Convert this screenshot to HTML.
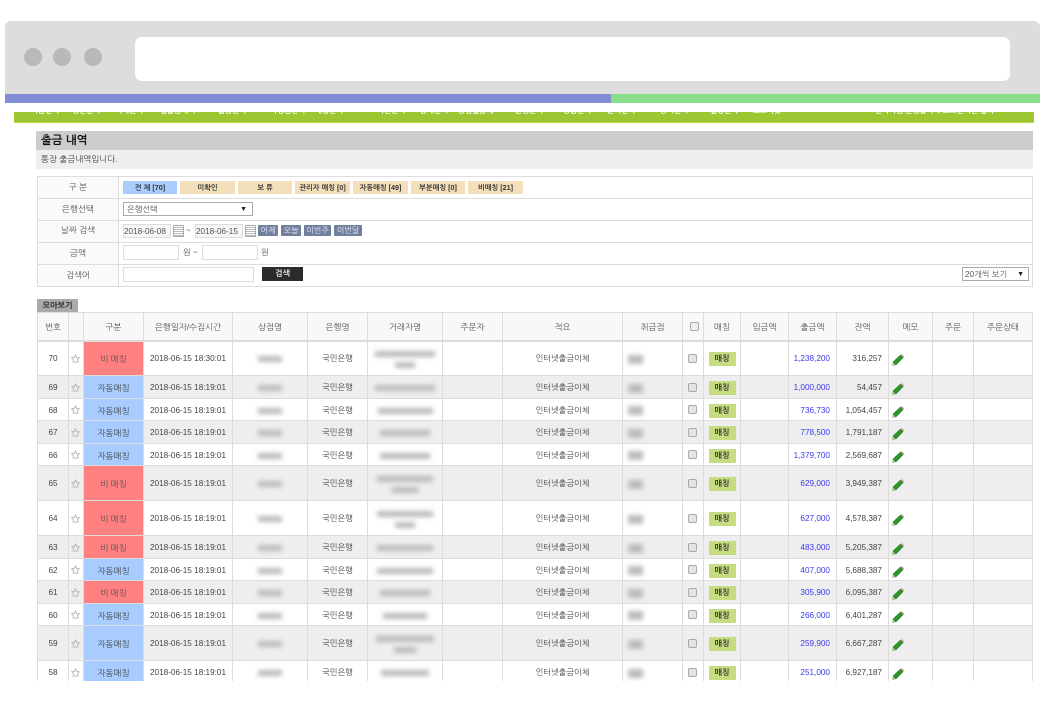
<!DOCTYPE html>
<html lang="ko"><head><meta charset="utf-8"><title>출금 내역</title>
<style>
*{box-sizing:border-box}
html,body{margin:0;padding:0;background:#fff}
body{width:1051px;height:705px;overflow:hidden;position:relative;font-family:"Liberation Sans","NanumGothic","Noto Sans CJK KR",sans-serif;font-size:8.2px;color:#444}
.a{position:absolute}
.nav span{position:absolute;top:-7px;color:#fff;font-size:7.5px;font-weight:bold;white-space:nowrap;line-height:11px}
.lbl{position:absolute;left:37px;width:82px;text-align:center;color:#555;font-size:8.5px;line-height:22px}
.chip{position:absolute;top:181px;height:13px;background:#f3dfba;color:#333;font-size:7.2px;line-height:13px;text-align:center;font-weight:bold;white-space:nowrap;overflow:hidden}
.inp{position:absolute;background:#fff;border:1px solid #ddd;font-size:8.2px;line-height:13px;color:#555;white-space:nowrap}
.btn{position:absolute;top:225px;height:11px;background:#7280a0;color:#e8e8f0;font-size:8px;line-height:11px;text-align:center;border-radius:1px}
.cal{position:absolute;top:225px;width:11px;height:12px;border:1px solid #aaa;border-radius:1px;background:repeating-linear-gradient(#fff 0 1px,#bbb 1px 2px)}
.wrap{position:absolute;left:37px;top:312px;width:996px;height:369px;overflow:hidden;filter:blur(.25px)}
table{border-collapse:collapse;table-layout:fixed;width:995px}
td,th{border:1px solid #dcdcdc;padding:2px 0 0;text-align:center;font-weight:normal;font-size:8.2px;color:#444;white-space:nowrap;overflow:hidden;line-height:10px}
th{background:#f8f8f8;font-size:8.5px;color:#555;border-bottom:2px solid #dcdcdc}
tr.g td{background:#eee}
td.r,tr.g td.r{background:#ff8080;color:#555;font-size:8.5px}
td.b,tr.g td.b{background:#a8ccff;color:#444;font-size:8.5px}
td.n{text-align:right;padding-right:6px}
td.u{text-align:right;padding-right:6px;color:#3a3aee}
.bl{display:block;margin:0 auto;background:#bbb;filter:blur(2.5px);height:6px}
.bk{display:block;margin-left:5px;width:15px;height:9px;background:#bbb;filter:blur(2.5px)}
.ck{display:block;width:9px;height:9px;margin:0 auto;border:1px solid #aaa;border-radius:2px;background:#e4e4e4;transform:translate(-1px,-1px)}
th .ck{transform:translate(1px,-1px);background:#eee}
.m{display:block;width:27px;height:14px;margin:0 auto;background:#c5dc80;color:#333;font-weight:bold;font-size:8px;line-height:14px;font-style:normal}
svg{display:block}
.s{margin-left:2px;transform:translateY(-1px)}
.p{margin-left:3px;transform:translateY(1px)}
</style></head><body>

<div class="a" style="left:5px;top:21px;width:1035px;height:73px;background:#ddd;border-radius:6px 6px 0 0"></div>
<div class="a" style="left:135px;top:37px;width:875px;height:44px;background:#fff;border-radius:7px"></div>
<div class="a" style="left:24px;top:48px;width:18px;height:18px;border-radius:50%;background:#b9b9b9"></div>
<div class="a" style="left:53px;top:48px;width:18px;height:18px;border-radius:50%;background:#b9b9b9"></div>
<div class="a" style="left:84px;top:48px;width:18px;height:18px;border-radius:50%;background:#b9b9b9"></div>
<div class="a" style="left:5px;top:94px;width:606px;height:9px;background:#828dd4"></div>
<div class="a" style="left:611px;top:94px;width:429px;height:9px;background:#8ae08a"></div>

<div class="a nav" style="left:14px;top:112px;width:1020px;height:11px;background:#9dc633;border-bottom:1px solid #b4d83c;overflow:hidden">
<span style="left:17px">자금관리</span><span style="left:58px">정산관리</span><span style="left:101px">거래관리</span><span style="left:146px">입출금내역</span><span style="left:204px">출금관리</span><span style="left:256px">가맹점관리</span><span style="left:301px">매칭관리</span><span style="left:363px">차단관리</span><span style="left:406px">통계관리</span><span style="left:444px">상점별통계</span><span style="left:501px">은행관리</span><span style="left:549px">상품관리</span><span style="left:593px">문의관리</span><span style="left:646px">공지관리</span><span style="left:696px">설정관리</span><span style="left:739px">로그아웃</span><span style="left:861px">관리자님 환영합니다 로그인시간 접속</span>
</div>

<div class="a" style="left:36px;top:131px;width:997px;height:19px;background:#cdcdcd;padding-left:5px;font-size:11.5px;font-weight:bold;line-height:21px;color:#111">출금 내역</div>
<div class="a" style="left:36px;top:150px;width:997px;height:19px;background:#efefef;padding-left:5px;font-size:8.5px;line-height:19px;color:#444">통장 출금내역입니다.</div>

<div class="a" style="left:37px;top:176px;width:996px;height:111px;border:1px solid #dcdcdc"></div>
<div class="a" style="left:38px;top:177px;width:81px;height:109px;background:#fafafa;border-right:1px solid #dcdcdc"></div>
<div class="a" style="left:37px;top:198px;width:996px;height:1px;background:#dcdcdc"></div>
<div class="a" style="left:37px;top:220px;width:996px;height:1px;background:#dcdcdc"></div>
<div class="a" style="left:37px;top:242px;width:996px;height:1px;background:#dcdcdc"></div>
<div class="a" style="left:37px;top:264px;width:996px;height:1px;background:#dcdcdc"></div>
<div class="lbl" style="top:176px">구 분</div>
<div class="lbl" style="top:198px">은행선택</div>
<div class="lbl" style="top:219px">날짜 검색</div>
<div class="lbl" style="top:242px">금액</div>
<div class="lbl" style="top:264px">검색어</div>

<div class="chip" style="left:123px;width:54px;background:#aaccff">전 체 [70]</div>
<div class="chip" style="left:180px;width:55px">미확인</div>
<div class="chip" style="left:238px;width:54px">보 류</div>
<div class="chip" style="left:295px;width:55px">관리자 매칭 [0]</div>
<div class="chip" style="left:353px;width:55px">자동매칭 [49]</div>
<div class="chip" style="left:411px;width:54px">부분매칭 [0]</div>
<div class="chip" style="left:468px;width:55px">비매칭 [21]</div>

<div class="inp" style="left:123px;top:202px;width:130px;height:14px;border-color:#aaa;padding-left:3px">은행선택<span style="position:absolute;right:5px;top:0;font-size:7px;color:#222">▼</span></div>
<div class="inp" style="left:123px;top:224px;width:48px;height:14px;background:#f6f6f6;padding-left:0">2018-06-08</div>
<div class="cal" style="left:173px"></div>
<div class="a" style="left:186px;top:225px;line-height:12px;color:#555">~</div>
<div class="inp" style="left:195px;top:224px;width:48px;height:14px;background:#f6f6f6;padding-left:0">2018-06-15</div>
<div class="cal" style="left:245px"></div>
<div class="btn" style="left:258px;width:20px">어제</div>
<div class="btn" style="left:281px;width:20px">오늘</div>
<div class="btn" style="left:304px;width:27px">이번주</div>
<div class="btn" style="left:334px;width:28px">이번달</div>

<div class="inp" style="left:123px;top:245px;width:56px;height:15px"></div>
<div class="a" style="left:183px;top:246px;line-height:13px;color:#555">원 ~</div>
<div class="inp" style="left:202px;top:245px;width:56px;height:15px"></div>
<div class="a" style="left:261px;top:246px;line-height:13px;color:#555">원</div>
<div class="inp" style="left:123px;top:267px;width:131px;height:15px"></div>
<div class="a" style="left:262px;top:267px;width:41px;height:14px;background:#2b2b2b;color:#eee;font-weight:bold;font-size:8px;line-height:14px;text-align:center">검색</div>
<div class="inp" style="left:962px;top:267px;width:67px;height:14px;border-color:#aaa;padding-left:2px">20개씩 보기<span style="position:absolute;right:4px;top:0;font-size:7px;color:#222">▼</span></div>

<div class="a" style="left:37px;top:299px;width:41px;height:13px;background:#aaa;color:#222;font-size:8px;font-weight:bold;line-height:13px;text-align:center">모아보기</div>

<svg width="0" height="0" style="position:absolute"><defs>
<symbol id="st" viewBox="0 0 10 10"><path d="M5 1 L6.3 3.8 L9.2 4.2 L7.2 6.2 L7.7 9 L2.3 9 L2.8 6.2 L.8 4.2 L3.7 3.8 Z" fill="none" stroke="#b5b5b5" stroke-width="1"/></symbol>
<symbol id="pn" viewBox="0 0 12 12"><path d="M.6 11.4 L1.4 7.6 L8.4 1 L11.2 3.6 L4.4 10.6 Z" fill="#2a962a" stroke="#1c661c" stroke-width=".5"/><path d="M8.4 1 L9.8 .2 L12 2.2 L11.2 3.6 Z" fill="#e08a8a"/><path d="M.6 11.4 L1.2 8.8 L3.2 10.8 Z" fill="#d9c49a"/></symbol>
</defs></svg>

<div class="wrap"><table>
<colgroup><col style="width:31px"><col style="width:15px"><col style="width:60px"><col style="width:89px"><col style="width:75px"><col style="width:60px"><col style="width:75px"><col style="width:60px"><col style="width:120px"><col style="width:60px"><col style="width:21px"><col style="width:37px"><col style="width:48px"><col style="width:48px"><col style="width:52px"><col style="width:44px"><col style="width:41px"><col style="width:59px"></colgroup>
<tr style="height:28px"><th>번호</th><th></th><th>구분</th><th>은행일자/수집시간</th><th>상점명</th><th>은행명</th><th>거래자명</th><th>주문자</th><th>적요</th><th>취급점</th><th><i class="ck"></i></th><th>매칭</th><th>입금액</th><th>출금액</th><th>잔액</th><th>메모</th><th>주문</th><th>주문상태</th></tr>
<tr style="height:35px"><td>70</td><td><svg class="s" width="9" height="9"><use href="#st"/></svg></td><td class="r">비 매칭</td><td>2018-06-15 18:30:01</td><td><i class="bl" style="width:24px"></i></td><td>국민은행</td><td><i class="bl" style="width:60px;margin-bottom:5px"></i><i class="bl" style="width:20px"></i></td><td></td><td>인터넷출금이체</td><td><i class="bk"></i></td><td><i class="ck"></i></td><td><i class="m">매칭</i></td><td></td><td class="u">1,238,200</td><td class="n">316,257</td><td><svg class="p" width="12" height="12"><use href="#pn"/></svg></td><td></td><td></td></tr>
<tr class="g" style="height:23px"><td>69</td><td><svg class="s" width="9" height="9"><use href="#st"/></svg></td><td class="b">자동매칭</td><td>2018-06-15 18:19:01</td><td><i class="bl" style="width:24px"></i></td><td>국민은행</td><td><i class="bl" style="width:60px"></i></td><td></td><td>인터넷출금이체</td><td><i class="bk"></i></td><td><i class="ck"></i></td><td><i class="m">매칭</i></td><td></td><td class="u">1,000,000</td><td class="n">54,457</td><td><svg class="p" width="12" height="12"><use href="#pn"/></svg></td><td></td><td></td></tr>
<tr style="height:22px"><td>68</td><td><svg class="s" width="9" height="9"><use href="#st"/></svg></td><td class="b">자동매칭</td><td>2018-06-15 18:19:01</td><td><i class="bl" style="width:24px"></i></td><td>국민은행</td><td><i class="bl" style="width:55px"></i></td><td></td><td>인터넷출금이체</td><td><i class="bk"></i></td><td><i class="ck"></i></td><td><i class="m">매칭</i></td><td></td><td class="u">736,730</td><td class="n">1,054,457</td><td><svg class="p" width="12" height="12"><use href="#pn"/></svg></td><td></td><td></td></tr>
<tr class="g" style="height:23px"><td>67</td><td><svg class="s" width="9" height="9"><use href="#st"/></svg></td><td class="b">자동매칭</td><td>2018-06-15 18:19:01</td><td><i class="bl" style="width:24px"></i></td><td>국민은행</td><td><i class="bl" style="width:50px"></i></td><td></td><td>인터넷출금이체</td><td><i class="bk"></i></td><td><i class="ck"></i></td><td><i class="m">매칭</i></td><td></td><td class="u">778,500</td><td class="n">1,791,187</td><td><svg class="p" width="12" height="12"><use href="#pn"/></svg></td><td></td><td></td></tr>
<tr style="height:22px"><td>66</td><td><svg class="s" width="9" height="9"><use href="#st"/></svg></td><td class="b">자동매칭</td><td>2018-06-15 18:19:01</td><td><i class="bl" style="width:24px"></i></td><td>국민은행</td><td><i class="bl" style="width:50px"></i></td><td></td><td>인터넷출금이체</td><td><i class="bk"></i></td><td><i class="ck"></i></td><td><i class="m">매칭</i></td><td></td><td class="u">1,379,700</td><td class="n">2,569,687</td><td><svg class="p" width="12" height="12"><use href="#pn"/></svg></td><td></td><td></td></tr>
<tr class="g" style="height:35px"><td>65</td><td><svg class="s" width="9" height="9"><use href="#st"/></svg></td><td class="r">비 매칭</td><td>2018-06-15 18:19:01</td><td><i class="bl" style="width:24px"></i></td><td>국민은행</td><td><i class="bl" style="width:56px;margin-bottom:5px"></i><i class="bl" style="width:26px"></i></td><td></td><td>인터넷출금이체</td><td><i class="bk"></i></td><td><i class="ck"></i></td><td><i class="m">매칭</i></td><td></td><td class="u">629,000</td><td class="n">3,949,387</td><td><svg class="p" width="12" height="12"><use href="#pn"/></svg></td><td></td><td></td></tr>
<tr style="height:35px"><td>64</td><td><svg class="s" width="9" height="9"><use href="#st"/></svg></td><td class="r">비 매칭</td><td>2018-06-15 18:19:01</td><td><i class="bl" style="width:24px"></i></td><td>국민은행</td><td><i class="bl" style="width:56px;margin-bottom:5px"></i><i class="bl" style="width:20px"></i></td><td></td><td>인터넷출금이체</td><td><i class="bk"></i></td><td><i class="ck"></i></td><td><i class="m">매칭</i></td><td></td><td class="u">627,000</td><td class="n">4,578,387</td><td><svg class="p" width="12" height="12"><use href="#pn"/></svg></td><td></td><td></td></tr>
<tr class="g" style="height:23px"><td>63</td><td><svg class="s" width="9" height="9"><use href="#st"/></svg></td><td class="r">비 매칭</td><td>2018-06-15 18:19:01</td><td><i class="bl" style="width:24px"></i></td><td>국민은행</td><td><i class="bl" style="width:56px"></i></td><td></td><td>인터넷출금이체</td><td><i class="bk"></i></td><td><i class="ck"></i></td><td><i class="m">매칭</i></td><td></td><td class="u">483,000</td><td class="n">5,205,387</td><td><svg class="p" width="12" height="12"><use href="#pn"/></svg></td><td></td><td></td></tr>
<tr style="height:22px"><td>62</td><td><svg class="s" width="9" height="9"><use href="#st"/></svg></td><td class="b">자동매칭</td><td>2018-06-15 18:19:01</td><td><i class="bl" style="width:24px"></i></td><td>국민은행</td><td><i class="bl" style="width:56px"></i></td><td></td><td>인터넷출금이체</td><td><i class="bk"></i></td><td><i class="ck"></i></td><td><i class="m">매칭</i></td><td></td><td class="u">407,000</td><td class="n">5,688,387</td><td><svg class="p" width="12" height="12"><use href="#pn"/></svg></td><td></td><td></td></tr>
<tr class="g" style="height:23px"><td>61</td><td><svg class="s" width="9" height="9"><use href="#st"/></svg></td><td class="r">비 매칭</td><td>2018-06-15 18:19:01</td><td><i class="bl" style="width:24px"></i></td><td>국민은행</td><td><i class="bl" style="width:50px"></i></td><td></td><td>인터넷출금이체</td><td><i class="bk"></i></td><td><i class="ck"></i></td><td><i class="m">매칭</i></td><td></td><td class="u">305,900</td><td class="n">6,095,387</td><td><svg class="p" width="12" height="12"><use href="#pn"/></svg></td><td></td><td></td></tr>
<tr style="height:22px"><td>60</td><td><svg class="s" width="9" height="9"><use href="#st"/></svg></td><td class="b">자동매칭</td><td>2018-06-15 18:19:01</td><td><i class="bl" style="width:24px"></i></td><td>국민은행</td><td><i class="bl" style="width:44px"></i></td><td></td><td>인터넷출금이체</td><td><i class="bk"></i></td><td><i class="ck"></i></td><td><i class="m">매칭</i></td><td></td><td class="u">266,000</td><td class="n">6,401,287</td><td><svg class="p" width="12" height="12"><use href="#pn"/></svg></td><td></td><td></td></tr>
<tr class="g" style="height:35px"><td>59</td><td><svg class="s" width="9" height="9"><use href="#st"/></svg></td><td class="b">자동매칭</td><td>2018-06-15 18:19:01</td><td><i class="bl" style="width:24px"></i></td><td>국민은행</td><td><i class="bl" style="width:58px;margin-bottom:5px"></i><i class="bl" style="width:22px"></i></td><td></td><td>인터넷출금이체</td><td><i class="bk"></i></td><td><i class="ck"></i></td><td><i class="m">매칭</i></td><td></td><td class="u">259,900</td><td class="n">6,667,287</td><td><svg class="p" width="12" height="12"><use href="#pn"/></svg></td><td></td><td></td></tr>
<tr style="height:23px"><td>58</td><td><svg class="s" width="9" height="9"><use href="#st"/></svg></td><td class="b">자동매칭</td><td>2018-06-15 18:19:01</td><td><i class="bl" style="width:24px"></i></td><td>국민은행</td><td><i class="bl" style="width:48px"></i></td><td></td><td>인터넷출금이체</td><td><i class="bk"></i></td><td><i class="ck"></i></td><td><i class="m">매칭</i></td><td></td><td class="u">251,000</td><td class="n">6,927,187</td><td><svg class="p" width="12" height="12"><use href="#pn"/></svg></td><td></td><td></td></tr>
</table></div>
</body></html>
